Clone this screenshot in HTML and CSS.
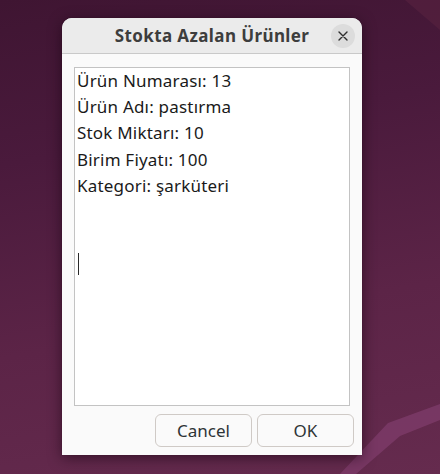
FILE: index.html
```html
<!DOCTYPE html>
<html lang="tr">
<head>
<meta charset="utf-8">
<link rel="stylesheet" href="styles.css">
</head>
<body>
<svg class="wallpaper" width="440" height="474" viewBox="0 0 440 474">
  <polygon points="388,423 440,404 440,420 400,436 356,474 340,474" fill="#7b3a67" opacity="0.85"/>
  <polygon points="405,0 440,0 440,30" fill="#55213f" opacity="0.7"/>
</svg>
<div class="dialog">
  <div class="header">
    <div class="title">Stokta Azalan Ürünler</div>
    <button class="close" aria-label="Kapat">
      <svg width="10" height="10" viewBox="0 0 10 10"><path d="M1 1L9 9M9 1L1 9" stroke="#2e2e2e" stroke-width="1.4" stroke-linecap="round"/></svg>
    </button>
  </div>
  <div class="content">
    <div class="textarea">
      <div class="line">Ürün Numarası: 13</div>
      <div class="line">Ürün Adı: pastırma</div>
      <div class="line">Stok Miktarı: 10</div>
      <div class="line">Birim Fiyatı: 100</div>
      <div class="line">Kategori: şarküteri</div>
      <div class="line"></div>
      <div class="line"></div>
      <div class="line"><span class="caret"></span></div>
    </div>
    <div class="buttons">
      <button class="btn">Cancel</button>
      <button class="btn">OK</button>
    </div>
  </div>
</div>
</body>
</html>
```
FILE: styles.css
```css
html, body {
  margin: 0;
  padding: 0;
}
body {
  width: 440px;
  height: 474px;
  overflow: hidden;
  position: relative;
  background: linear-gradient(170deg, #3f1532 0%, #4a1a3c 30%, #5c2447 65%, #652b4e 100%);
  font-family: "Noto Sans", "DejaVu Sans", sans-serif;
  padding: 18px 0 0 62px;
  box-sizing: border-box;
}
.wallpaper {
  position: absolute;
  left: 0;
  top: 0;
}
.dialog {
  position: relative;
  width: 300px;
  height: 437px;
  background: #fafafa;
  border-radius: 10px 10px 0 0;
  box-shadow: 0 3px 14px rgba(20, 0, 15, 0.55), 0 0 1px rgba(0,0,0,0.4);
  display: flex;
  flex-direction: column;
}
.header {
  height: 35px;
  border-bottom: 1px solid #c9c9c9;
  background: #ebebeb;
  border-radius: 10px 10px 0 0;
  display: flex;
  align-items: center;
  justify-content: center;
  position: relative;
}
.title {
  font-weight: bold;
  font-size: 17px;
  color: #3d3d3d;
  letter-spacing: 0.4px;
}
.close {
  position: absolute;
  right: 7px;
  top: 6px;
  width: 24px;
  height: 24px;
  border-radius: 50%;
  border: none;
  background: #dcdcdc;
  padding: 0;
  display: flex;
  align-items: center;
  justify-content: center;
}
.content {
  flex: 1;
  display: flex;
  flex-direction: column;
  padding: 13px 8px 8px 12px;
}
.textarea {
  width: 276px;
  height: 339px;
  box-sizing: border-box;
  border: 1px solid #c3c3c3;
  background: #ffffff;
  padding: 0 0 0 2px;
  color: #1a1a1a;
  font-size: 17px;
  letter-spacing: 0.2px;
}
.line {
  height: 26.2px;
  line-height: 26.2px;
  white-space: nowrap;
}
.caret {
  display: inline-block;
  width: 1px;
  height: 22px;
  background: #2a2a2a;
  vertical-align: middle;
  margin-left: 1px;
  position: relative;
  top: -2px;
}
.buttons {
  margin-top: 8px;
  display: flex;
  justify-content: flex-end;
  gap: 5px;
}
.btn {
  width: 97px;
  height: 33px;
  border: 1px solid #cfcac6;
  border-radius: 6px;
  background: #fafafa;
  font-family: "Noto Sans", "DejaVu Sans", sans-serif;
  font-size: 17px;
  color: #2e3436;
  padding: 0;
}
```
